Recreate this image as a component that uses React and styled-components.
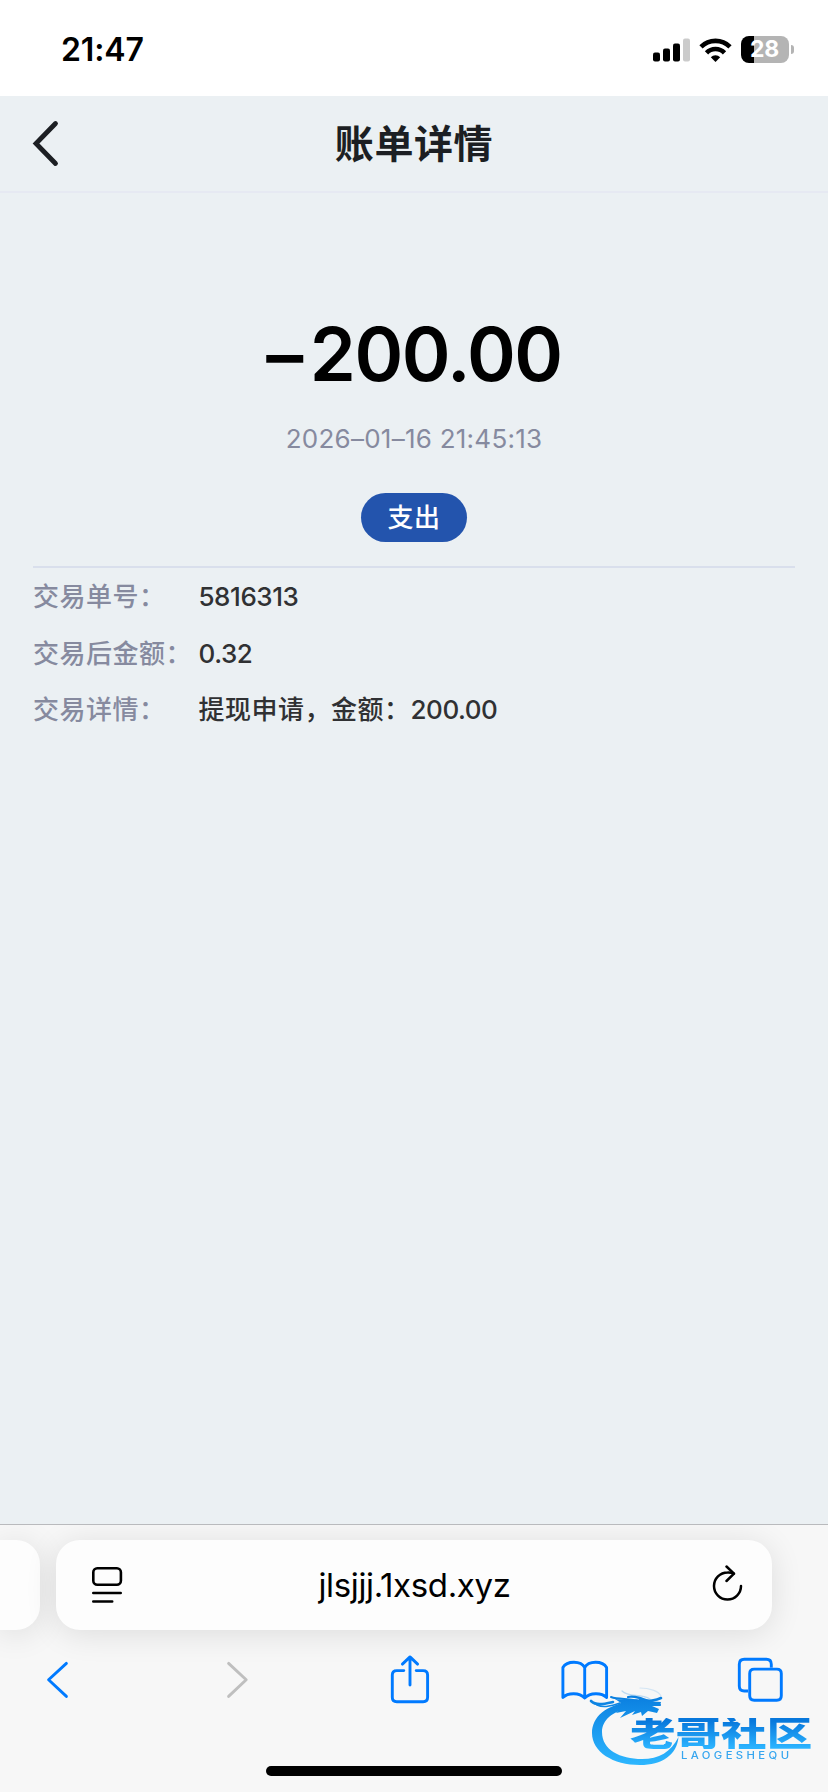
import React from 'react';
import styled, { createGlobalStyle } from 'styled-components';

const GlobalStyle = createGlobalStyle`
  * {
    box-sizing: border-box;
  }

  body {
    margin: 0;
    font-family: Inter, 'Noto Sans CJK SC', sans-serif;
    background: #ebf0f3;
  }

  svg {
    display: block;
    flex: none;
  }
`;

const Screen = styled.div`
  position: relative;
  display: flex;
  flex-direction: column;
  width: 828px;
  height: 1792px;
  overflow: hidden;
  background: #ebf0f3;
`;

const StatusBar = styled.div`
  display: flex;
  justify-content: space-between;
  align-items: center;
  height: 96px;
  padding: 3px 34px 0 61px;
  background: #fff;
`;

const Time = styled.span`
  font-size: 32px;
  font-weight: 600;
  line-height: 40px;
  letter-spacing: -0.1px;
  color: #000;
`;

const StatusIcons = styled.div`
  display: flex;
  align-items: center;
  gap: 9px;
`;

const Battery = styled.div`
  display: flex;
  align-items: center;
  gap: 2px;
`;

const BatteryBody = styled.div`
  width: 48px;
  height: 27px;
  border-radius: 8px;
  background: linear-gradient(90deg, #000 ${({ $level }) => $level}%, #b4b4b4 ${({ $level }) => $level}%);
  color: #fff;
  font-size: 23px;
  font-weight: 700;
  line-height: 27px;
  letter-spacing: -0.3px;
  text-align: center;
  padding-right: 1px;
`;

const BatteryTip = styled.div`
  width: 3px;
  height: 9px;
  border-radius: 0 4px 4px 0;
  background: #b4b4b4;
`;

const Header = styled.header`
  display: grid;
  grid-template-columns: 100px 1fr 100px;
  align-items: center;
  height: 97px;
  border-bottom: 2px solid #e6e9f2;
`;

const BackButton = styled.button`
  padding: 0 0 2px 31px;
  border: 0;
  background: none;
`;

const Title = styled.h1`
  margin: 0;
  font-size: 39px;
  font-weight: 700;
  line-height: 56px;
  letter-spacing: 0.6px;
  text-align: center;
  color: #1c1f23;
`;

const Content = styled.main`
  flex: 1;
  padding: 0 33px;
`;

const Summary = styled.section`
  display: flex;
  flex-direction: column;
  align-items: center;
  height: 375px;
  padding-top: 116px;
  border-bottom: 2px solid #d9dfec;
`;

const Amount = styled.div`
  font-size: 74px;
  font-weight: 600;
  line-height: 90px;
  letter-spacing: -1.5px;
  color: #000;
`;

const Sign = styled.span`
  margin-right: 8px;
`;

const DateText = styled.div`
  margin-top: 20px;
  font-size: 26px;
  line-height: 40px;
  letter-spacing: 0.25px;
  color: #868a9f;
`;

const Tag = styled.div`
  width: 106px;
  height: 49px;
  margin-top: 34px;
  border-radius: 25px;
  background: #2354ad;
  color: #fff;
  font-size: 26px;
  font-weight: 500;
  line-height: 50px;
  letter-spacing: 0.4px;
  text-align: center;
`;

const DetailRow = styled.div`
  display: flex;
  height: 56.5px;
  font-size: 26px;
  font-weight: 500;
  line-height: 58px;
`;

const DetailLabel = styled.span`
  width: 165.5px;
  letter-spacing: 0.5px;
  color: #868a9f;
  white-space: nowrap;
`;

const DetailValue = styled.span`
  color: #303133;
  letter-spacing: 0.5px;
`;

const Digits = styled.span`
  letter-spacing: -0.45px;
`;

const BrowserBar = styled.footer`
  display: flex;
  flex-direction: column;
  height: 268px;
  border-top: 1px solid #b9babd;
  background: #f7f7f7;
  overflow: hidden;
`;

const TabStrip = styled.div`
  display: flex;
  gap: 16px;
  padding-top: 15px;
`;

const PreviousTab = styled.div`
  width: 40px;
  height: 90px;
  border-radius: 0 24px 24px 0;
  background: #fdfdfd;
  box-shadow: 0 4px 32px rgba(0, 0, 0, 0.11);
`;

const AddressBar = styled.div`
  display: grid;
  grid-template-columns: 40px 1fr 33px;
  align-items: center;
  width: 716px;
  height: 90px;
  padding: 0 28px 0 32px;
  border-radius: 24px;
  background: #fdfdfd;
  box-shadow: 0 4px 32px rgba(0, 0, 0, 0.11);
`;

const Address = styled.span`
  padding-right: 10px;
  font-size: 33px;
  line-height: 44px;
  letter-spacing: -0.35px;
  text-align: center;
  color: #000;
`;

const Toolbar = styled.nav`
  display: flex;
  justify-content: space-between;
  padding: 24px 42px 0 34px;
`;

const HomeIndicator = styled.div`
  width: 296px;
  height: 10px;
  margin: 60px auto 0;
  border-radius: 5px;
  background: #000;
`;

// sits above the browser toolbar
const Watermark = styled.div`
  position: absolute;
  left: 584px;
  top: 1686px;
  width: 240px;
  height: 84px;
`;

const Dragon = styled.svg`
  position: absolute;
  left: 0;
  top: 0;
`;

const WatermarkName = styled.div`
  position: absolute;
  left: 46px;
  top: 32px;
  font-size: 34px;
  font-weight: 900;
  line-height: 31px;
  white-space: nowrap;
  transform: scaleX(1.34);
  transform-origin: 0 0;
  background: linear-gradient(#0878dc 10%, #2bb3ff 95%);
  background-clip: text;
  -webkit-text-fill-color: transparent;
`;

const WatermarkSub = styled.div`
  position: absolute;
  left: 97px;
  top: 64px;
  font-size: 10px;
  font-weight: 500;
  line-height: 10px;
  letter-spacing: 3px;
  white-space: nowrap;
  transform: scaleX(1.13);
  transform-origin: 0 0;
  color: #36a6ef;
`;

const details = [
  { label: '交易单号：', amount: '5816313' },
  { label: '交易后金额：', amount: '0.32' },
  { label: '交易详情：', text: '提现申请，金额：', amount: '200.00' },
];

const SignalIcon = () => (
  <svg width="37" height="24" viewBox="0 0 37 24">
    <rect x="0" y="14.5" width="7" height="9" rx="2" />
    <rect x="10" y="10.5" width="7" height="13" rx="2" />
    <rect x="20" y="5.5" width="7" height="18" rx="2" />
    <rect x="30" y="0.5" width="7" height="23" rx="2" fill="#cbcbcb" />
  </svg>
);

const WifiIcon = () => (
  <svg width="33" height="24" viewBox="0 0 33 24">
    <g fill="none" stroke="#000" strokeWidth="4.6">
      <path d="M2 8.9A20.5 20.5 0 0 1 31 8.9" />
      <path d="M7.5 14.9A12.5 12.5 0 0 1 25.5 14.9" />
    </g>
    <path d="M16.5 24L11.8 19.3A6.7 6.7 0 0 1 21.2 19.3Z" />
  </svg>
);

const ChevronIcon = () => (
  <svg width="30" height="48" viewBox="0 0 30 48" fill="none" stroke="#1c1f23" strokeWidth="4.8" strokeLinecap="round">
    <path d="M24.5 4.5L5 24.5L24.5 44.5" strokeLinejoin="miter" />
  </svg>
);

const ReaderIcon = () => (
  <svg width="40" height="40" viewBox="0 0 40 40" fill="none" stroke="#000" strokeWidth="2.6" strokeLinecap="round">
    <rect x="5.3" y="3.3" width="27.6" height="16.4" rx="4" />
    <path d="M5.3 28H32.7M5.3 36.5H24.2" />
  </svg>
);

const ReloadIcon = () => (
  <svg width="33" height="40" viewBox="0 0 33 40" fill="none" stroke="#000" strokeWidth="2.5" strokeLinecap="round" strokeLinejoin="round">
    <path d="M30 21A13.5 13.5 0 1 1 16.5 7.5C19 7.4 21.2 7.8 22.8 8.7" />
    <path d="M15.5 1.5L23 8.7L15.5 16" />
  </svg>
);

const toolbarIcons = [
  { name: 'back', d: 'M32.4 9.4L14.6 25.8L32.4 42.4' },
  { name: 'forward', color: '#bfbfbf', d: 'M18.6 9.4L36.2 25.8L18.6 42.4' },
  {
    name: 'share',
    d: 'M17.8 16.6H10.8Q6.3 16.6 6.3 21.1V43.2Q6.3 47.7 10.8 47.7H37.1Q41.6 47.7 41.6 43.2V21.1Q41.6 16.6 37.1 16.6H30.2M24 31V3.4M16.4 10.1L24 2.9L31.6 10.1',
  },
  {
    name: 'bookmarks',
    d: 'M22.7 13.5C19 6.5 5 6.5 0.9 13.5V43.5C6 38.4 17.5 38.4 22.7 44C28 38.4 39.5 38.4 44.6 43.5V13.5C40.5 6.5 26.5 6.5 22.7 13.5V44',
  },
  {
    name: 'tabs',
    d: 'M10 37H6.3Q1.3 37 1.3 32V10.3Q1.3 5.3 6.3 5.3H28.3Q33.3 5.3 33.3 10.3V13.5M16.2 15.1H38.8Q43.3 15.1 43.3 19.6V41.8Q43.3 46.3 38.8 46.3H16.2Q11.7 46.3 11.7 41.8V19.6Q11.7 15.1 16.2 15.1Z',
    cap: 'butt',
  },
];

const ToolbarIcon = ({ d, color = '#007aff', cap = 'round' }) => (
  <svg
    width="48"
    height="52"
    viewBox="0 0 48 52"
    overflow="visible"
    fill="none"
    stroke={color}
    strokeWidth="2.9"
    strokeLinecap={cap}
    strokeLinejoin="round"
  >
    <path d={d} />
  </svg>
);

const DragonIcon = () => (
  <Dragon width="120" height="84" viewBox="0 0 120 84">
    <defs>
      <linearGradient id="dragon" gradientUnits="userSpaceOnUse" x1="0" y1="10" x2="0" y2="80">
        <stop offset="0" stopColor="#0a7fe0" />
        <stop offset="1" stopColor="#2db7ff" />
      </linearGradient>
    </defs>
    {/* body */}
    <path
      fill="url(#dragon)"
      d="M46 17C22 18 8 31 8 47C8 66 29 79 56 79C78 79 93 69 94.5 51C87 66 75 73 58 73C36 73 18 64 18 46C18 34 29 25 44 23Z"
    />
    {/* head */}
    <path
      fill="url(#dragon)"
      d="M28 11C36 16 41 12 47 14C53 12 57 14 62 15L77 16L76 20L68 20L75 23L73 27L64 25L58 30L57 26L48 29L51 25L36 32L42 25L32 27L38 21L30 20L37 17Z"
    />
    {/* whiskers */}
    <g fill="none" stroke="url(#dragon)" strokeLinecap="round">
      <path d="M7 15C12 20 20 18 29 16" strokeWidth="2.6" />
      <path d="M13 19C20 22 27 20 36 17" strokeWidth="1.6" />
      <path d="M27 11C35 14 47 12 58 16" strokeWidth="2" />
      <path d="M44 11C54 9 65 16 76 19" strokeWidth="2.2" />
      <path d="M56 14C64 16 73 14 77 12" strokeWidth="2.6" />
      <path d="M38 5C45 12 56 7 66 13" strokeWidth="1.2" opacity="0.25" />
      <path d="M56 2C65 2 75 5 77 10" strokeWidth="1.2" opacity="0.15" />
    </g>
  </Dragon>
);

const App = () => {
  return (
    <Screen>
      <GlobalStyle />
      <StatusBar>
        <Time>21:47</Time>
        <StatusIcons>
          <SignalIcon />
          <WifiIcon />
          <Battery>
            <BatteryBody $level={28}>28</BatteryBody>
            <BatteryTip />
          </Battery>
        </StatusIcons>
      </StatusBar>
      <Header>
        <BackButton aria-label="返回">
          <ChevronIcon />
        </BackButton>
        <Title>账单详情</Title>
      </Header>
      <Content>
        <Summary>
          <Amount>
            <Sign>–</Sign>200.00
          </Amount>
          <DateText>2026–01–16 21:45:13</DateText>
          <Tag>支出</Tag>
        </Summary>
        {details.map((item) => (
          <DetailRow key={item.label}>
            <DetailLabel>{item.label}</DetailLabel>
            <DetailValue>
              {item.text}
              <Digits>{item.amount}</Digits>
            </DetailValue>
          </DetailRow>
        ))}
      </Content>
      <BrowserBar>
        <TabStrip>
          <PreviousTab />
          <AddressBar>
            <ReaderIcon />
            <Address>jlsjjj.1xsd.xyz</Address>
            <ReloadIcon />
          </AddressBar>
        </TabStrip>
        <Toolbar>
          {toolbarIcons.map(({ name, ...icon }) => (
            <ToolbarIcon key={name} {...icon} />
          ))}
        </Toolbar>
        <HomeIndicator />
      </BrowserBar>
      <Watermark>
        <DragonIcon />
        <WatermarkName>老哥社区</WatermarkName>
        <WatermarkSub>LAOGESHEQU</WatermarkSub>
      </Watermark>
    </Screen>
  );
};

export default App;
